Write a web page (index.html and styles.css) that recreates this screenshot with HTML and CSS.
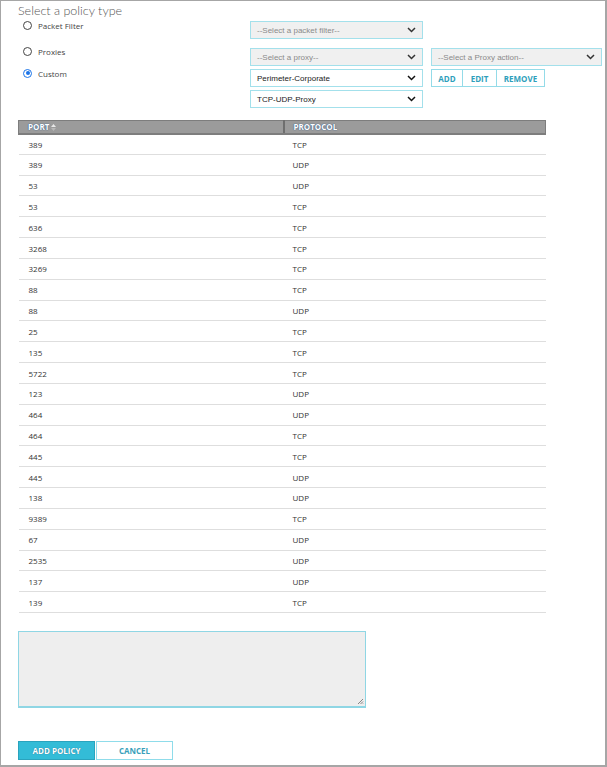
FILE: index.html
```html
<!DOCTYPE html>
<html>
<head>
<meta charset="utf-8">
<link rel="stylesheet" href="styles.css">
</head>
<body>
<div class="frame">
  <h1 class="title">Select a policy type</h1>
  <div class="policy-grid">
    <div class="radios">
      <label class="radio r1"><span class="dot"></span>Packet Filter</label>
      <label class="radio r2"><span class="dot"></span>Proxies</label>
      <label class="radio r3"><span class="dot on"></span>Custom</label>
    </div>
    <div class="col1">
      <div class="sel disabled s1"><span>--Select a packet filter--</span><svg class="chev" width="9" height="6" viewBox="0 0 9 6"><path d="M1 1 L4.5 4.5 L8 1" fill="none" stroke="#333" stroke-width="1.5"/></svg></div>
      <div class="sel disabled s2"><span>--Select a proxy--</span><svg class="chev" width="9" height="6" viewBox="0 0 9 6"><path d="M1 1 L4.5 4.5 L8 1" fill="none" stroke="#333" stroke-width="1.5"/></svg></div>
      <div class="sel s3"><span>Perimeter-Corporate</span><svg class="chev" width="9" height="6" viewBox="0 0 9 6"><path d="M1 1 L4.5 4.5 L8 1" fill="none" stroke="#111" stroke-width="1.5"/></svg></div>
      <div class="sel s3"><span>TCP-UDP-Proxy</span><svg class="chev" width="9" height="6" viewBox="0 0 9 6"><path d="M1 1 L4.5 4.5 L8 1" fill="none" stroke="#111" stroke-width="1.5"/></svg></div>
    </div>
    <div class="col2">
      <div class="sel disabled"><span>--Select a Proxy action--</span><svg class="chev" width="9" height="6" viewBox="0 0 9 6"><path d="M1 1 L4.5 4.5 L8 1" fill="none" stroke="#333" stroke-width="1.5"/></svg></div>
      <div class="btn-group">
        <button class="gbtn add">ADD</button><button class="gbtn edit">EDIT</button><button class="gbtn remove">REMOVE</button>
      </div>
    </div>
  </div>

  <table class="ports">
    <thead>
      <tr><th class="c-port">PORT <svg class="sort" width="5" height="7" viewBox="0 0 5 7"><path d="M2.5 0 L5 3 L0 3 Z" fill="#e8e8e8"/><path d="M0 4 L5 4 L2.5 7 Z" fill="#b8b8b8"/></svg></th><th class="c-proto">PROTOCOL</th></tr>
    </thead>
    <tbody>
      <tr><td>389</td><td>TCP</td></tr>
      <tr><td>389</td><td>UDP</td></tr>
      <tr><td>53</td><td>UDP</td></tr>
      <tr><td>53</td><td>TCP</td></tr>
      <tr><td>636</td><td>TCP</td></tr>
      <tr><td>3268</td><td>TCP</td></tr>
      <tr><td>3269</td><td>TCP</td></tr>
      <tr><td>88</td><td>TCP</td></tr>
      <tr><td>88</td><td>UDP</td></tr>
      <tr><td>25</td><td>TCP</td></tr>
      <tr><td>135</td><td>TCP</td></tr>
      <tr><td>5722</td><td>TCP</td></tr>
      <tr><td>123</td><td>UDP</td></tr>
      <tr><td>464</td><td>UDP</td></tr>
      <tr><td>464</td><td>TCP</td></tr>
      <tr><td>445</td><td>TCP</td></tr>
      <tr><td>445</td><td>UDP</td></tr>
      <tr><td>138</td><td>UDP</td></tr>
      <tr><td>9389</td><td>TCP</td></tr>
      <tr><td>67</td><td>UDP</td></tr>
      <tr><td>2535</td><td>UDP</td></tr>
      <tr><td>137</td><td>UDP</td></tr>
      <tr><td>139</td><td>TCP</td></tr>
    </tbody>
  </table>

  <div class="notes"><svg class="grip" width="7" height="7" viewBox="0 0 7 7"><path d="M6 1 L1 6 M6 3.5 L3.5 6 M6 5.5 L5.5 6" stroke="#777" stroke-width="0.9"/></svg></div>

  <div class="actions">
    <button class="primary">ADD POLICY</button><button class="secondary">CANCEL</button>
  </div>
</div>
</body>
</html>
```

FILE: styles.css
```css
html, body {
  margin: 0;
  padding: 0;
  background: #fff;
}
.frame {
  width: 607px;
  height: 767px;
  box-sizing: border-box;
  border-top: 1px solid #a6a6a6;
  border-left: 1px solid #a6a6a6;
  border-right: 2px solid #a6a6a6;
  border-bottom: 2px solid #a6a6a6;
  padding-left: 17px;
  font-family: "Open Sans", "Liberation Sans", sans-serif;
}
.title {
  margin: 0;
  padding-top: 2px;
  font-family: Lato, "Open Sans", sans-serif;
  font-weight: 300;
  font-size: 12.5px;
  line-height: 16px;
  color: #555;
  height: 18px;
  box-sizing: border-box;
}
.policy-grid {
  display: grid;
  grid-template-columns: 224px 173px 171px;
  column-gap: 8px;
  align-items: start;
}
.radios {
  display: flex;
  flex-direction: column;
  padding-left: 5px;
}
.radio {
  display: flex;
  align-items: center;
  height: 12px;
  font-size: 8px;
  color: #444;
}
.r2 { margin-top: 14px; }
.r3 { margin-top: 10px; }
.dot {
  width: 7px;
  height: 7px;
  border: 1px solid #444;
  border-radius: 50%;
  margin-right: 6px;
  box-sizing: content-box;
  position: relative;
}
.dot.on {
  border-color: #1a73e8;
}
.dot.on::after {
  content: "";
  position: absolute;
  left: 1.5px;
  top: 1.5px;
  width: 4px;
  height: 4px;
  border-radius: 50%;
  background: #1a73e8;
}
.col1 {
  display: flex;
  flex-direction: column;
  gap: 3px;
  padding-top: 2px;
}
.col1 .s2 { margin-top: 6px; }
.col2 {
  display: flex;
  flex-direction: column;
  gap: 3px;
  padding-top: 29px;
}
.sel {
  height: 18px;
  box-sizing: border-box;
  border: 1px solid #a3e0eb;
  background: #fff;
  display: flex;
  align-items: center;
  justify-content: space-between;
  padding: 0 6px 0 6px;
  font-family: "Liberation Sans", Arial, sans-serif;
  font-size: 8px;
  color: #222;
}
.sel.disabled {
  background: #f0f0f0;
  color: #8a8a8a;
}
.chev { flex: none; }
.btn-group {
  display: flex;
  height: 18px;
}
.gbtn {
  height: 18px;
  box-sizing: border-box;
  border: 1px solid #94dbe8;
  background: #fff;
  color: #2f9fbb;
  font-family: "Open Sans", sans-serif;
  font-weight: 700;
  font-size: 8px;
  padding: 0;
  margin: 0;
}
.gbtn + .gbtn { border-left: none; }
.add { width: 32px; }
.edit { width: 34px; }
.remove { width: 48px; }

.ports {
  margin-top: 12px;
  width: 528px;
  border-collapse: collapse;
  font-size: 8px;
  color: #333;
}
.ports th {
  background: #9b9b9b;
  height: 13px;
  padding: 0 0 0 9px;
  text-align: left;
  color: #fff;
  font-weight: 700;
  font-size: 8px;
  line-height: 10px;
  border-top: 1px solid #7d7d7d;
  border-bottom: 2px solid #7d7d7d;
  text-shadow: 0 0 1px #3d5f8a, 0 0 1px #3d5f8a;
  box-sizing: border-box;
}
.ports th.c-port {
  width: 265px;
  border-left: 1px solid #7d7d7d;
  border-right: 2px solid #6e6e6e;
}
.ports th.c-proto {
  border-right: 1px solid #7d7d7d;
}
.sort {
  vertical-align: -1px;
}
.ports td {
  height: 20.83px;
  padding: 0 0 0 10px;
  border-bottom: 1px solid #dedede;
  box-sizing: border-box;
}
.ports td + td {
  padding-left: 9px;
}
.notes {
  margin-top: 18px;
  width: 348px;
  height: 77px;
  box-sizing: border-box;
  border: 1px solid #8fd6e4;
  border-bottom-width: 2px;
  background: #eeeeee;
  position: relative;
}
.grip {
  position: absolute;
  right: 1px;
  bottom: 1px;
}
.actions {
  margin-top: 33px;
  display: flex;
  gap: 1px;
}
.primary, .secondary {
  width: 77px;
  height: 19px;
  box-sizing: border-box;
  font-family: "Open Sans", sans-serif;
  font-weight: 700;
  font-size: 8px;
  padding: 0;
  margin: 0;
}
.primary {
  background: #33bcd7;
  border: 1px solid #2aa3bd;
  color: #fff;
  text-shadow: 0 0 1px #1f5f80;
}
.secondary {
  background: #fff;
  border: 1px solid #8fdcea;
  color: #3a9fba;
}
```
